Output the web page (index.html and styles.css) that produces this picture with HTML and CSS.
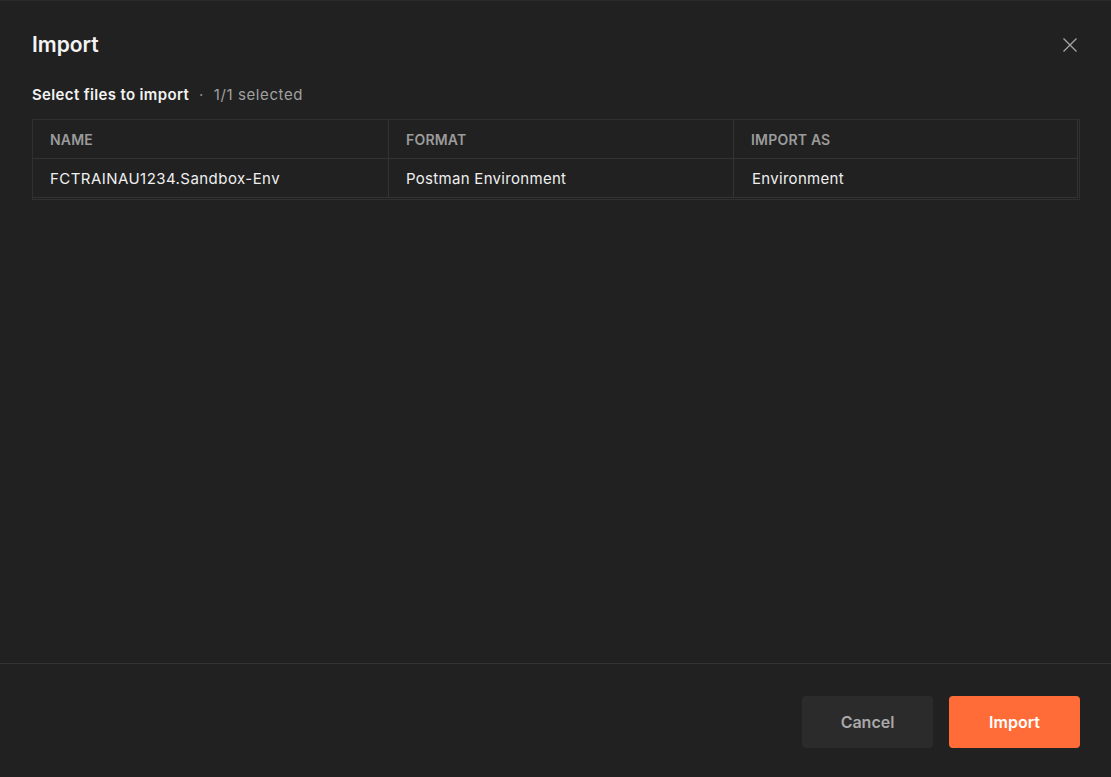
FILE: index.html
```html
<!DOCTYPE html>
<html>
<head>
<meta charset="utf-8">
<link rel="stylesheet" href="styles.css">
</head>
<body>
<div class="modal">
  <div class="modal-header">
    <h1 class="title">Import</h1>
    <button class="close" aria-label="Close">
      <svg width="16" height="16" viewBox="0 0 16 16"><path d="M1.5 1.5L14.5 14.5M14.5 1.5L1.5 14.5" stroke="#a6a6a6" stroke-width="1.3" fill="none"/></svg>
    </button>
  </div>
  <div class="modal-body">
    <div class="subtitle"><span class="sub-strong">Select files to import</span><span class="dot">·</span><span class="sub-muted">1/1 selected</span></div>
    <table class="files">
      <thead>
        <tr><th class="c1">NAME</th><th class="c2">FORMAT</th><th class="c3">IMPORT AS</th></tr>
      </thead>
      <tbody>
        <tr><td class="name">FCTRAINAU1234.Sandbox-Env</td><td>Postman Environment</td><td class="as">Environment</td></tr>
      </tbody>
    </table>
  </div>
  <div class="modal-footer">
    <button class="btn btn-secondary">Cancel</button>
    <button class="btn btn-primary">Import</button>
  </div>
</div>
</body>
</html>
```
FILE: styles.css
```css
html, body {
  margin: 0;
  padding: 0;
  background: #212121;
}
body {
  font-family: Inter, "Noto Sans", "Liberation Sans", sans-serif;
  color: #f0f0f0;
  -webkit-font-smoothing: antialiased;
}
.modal {
  height: 777px;
  box-sizing: border-box;
  display: flex;
  flex-direction: column;
  background: #212121;
  border-top: 1px solid #2a2a2a;
}
.modal-header {
  display: flex;
  align-items: center;
  justify-content: space-between;
  padding: 28px 32px 0 32px;
}
.title {
  margin: 0;
  font-size: 21px;
  line-height: 32px;
  font-weight: 600;
  color: #f4f4f4;
}
.close {
  background: none;
  border: 0;
  padding: 0;
  width: 16px;
  height: 16px;
  margin-right: 1px;
  display: flex;
  cursor: pointer;
}
.modal-body {
  flex: 1;
  padding: 24px 31px 0 32px;
}
.subtitle {
  font-size: 15px;
  line-height: 20px;
  display: flex;
  align-items: center;
  letter-spacing: 0.35px;
}
.sub-strong {
  font-weight: 600;
  color: #f2f2f2;
}
.dot {
  color: #8a8a8a;
  margin: 0 10px;
}
.sub-muted {
  color: #a0a0a0;
  letter-spacing: 0.6px;
}
.files {
  margin-top: 14px;
  width: 100%;
  border-collapse: separate;
  border-spacing: 0;
  border: 1px solid #303030;
  padding: 0 1px 1px 0;
  font-size: 15px;
  letter-spacing: 0.3px;
}
.files th, .files td {
  text-align: left;
  border-right: 1px solid #333;
  border-bottom: 1px solid #333;
  padding: 0 17px;
  height: 38px;
}
.files th {
  font-size: 14px;
  font-weight: 600;
  color: #9b9b9b;
  letter-spacing: 0.2px;
  padding-top: 0;
  height: 38px;
}
.files td {
  color: #efefef;
}
.files td.name {
  letter-spacing: 0.45px;
}
.files td.as {
  padding-left: 18px;
}
.c1 { width: 321px; }
.c2 { width: 310px; }
.modal-footer {
  border-top: 1px solid #333;
  display: flex;
  justify-content: flex-end;
  gap: 16px;
  padding: 32px 31px 29px 32px;
}
.btn {
  width: 131px;
  height: 52px;
  border: 0;
  border-radius: 4px;
  font-family: inherit;
  font-size: 16px;
  font-weight: 600;
  cursor: pointer;
}
.btn-secondary {
  background: #2b2b2b;
  color: #a8a8a8;
}
.btn-primary {
  background: #ff6c37;
  color: #ffffff;
}
```
